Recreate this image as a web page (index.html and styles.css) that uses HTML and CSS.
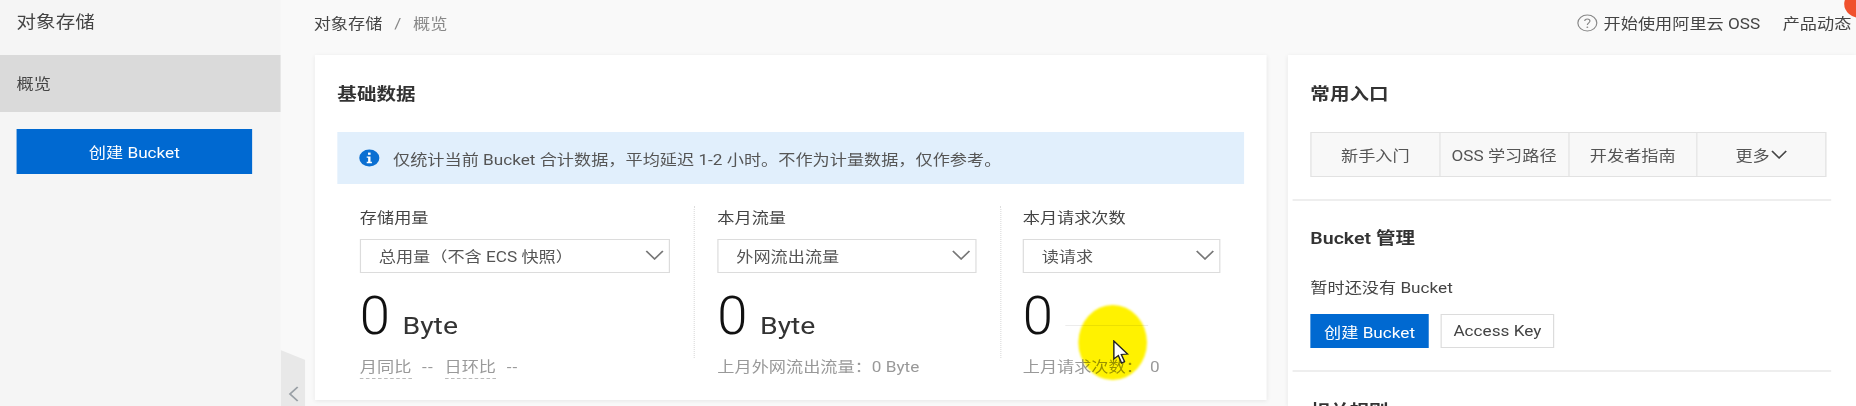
FILE: index.html
```html
<!DOCTYPE html>
<html lang="zh-CN">
<head>
  <meta charset="UTF-8" />
  <meta name="viewport" content="width=device-width, initial-scale=1.0"/>
  <title>对象存储 - 概览</title>
  <link rel="stylesheet" href="styles.css">
</head>
<body>
  <div class="page">
    <aside class="sidebar">
      <div class="sidebar-title">对象存储</div>
      <div class="nav-item">概览</div>
      <button class="btn btn-primary btn-wide">创建 Bucket</button>
    </aside>

    <div class="collapse-tab">
      <svg width="10" height="16" viewBox="0 0 10 16"><path d="M8.5 1 L2 8 L8.5 15" fill="none" stroke="#9aa0a6" stroke-width="1.6"/></svg>
    </div>

    <main class="main">
      <header class="topbar">
        <div class="breadcrumb">对象存储<span class="sep">/</span><span class="crumb-current">概览</span></div>
        <div class="toplinks">
          <span class="help">
            <svg width="18" height="18" viewBox="0 0 18 18"><circle cx="9" cy="9" r="8" fill="none" stroke="#888" stroke-width="1"/><path d="M6.8 7 C6.8 4.2 11.2 4.2 11.2 7 C11.2 8.8 9 8.8 9 11" fill="none" stroke="#888" stroke-width="1"/><circle cx="9" cy="13.2" r=".8" fill="#888"/></svg>
            开始使用阿里云 OSS
          </span>
          <span>产品动态</span>
        </div>
        <span class="red-dot"></span>
      </header>

      <div class="content">
        <section class="card card-data">
          <h2 class="card-title">基础数据</h2>
          <div class="alert">
            <svg width="18" height="18" viewBox="0 0 18 18"><circle cx="9" cy="9" r="8.5" fill="#0a6fd2"/><rect x="7.9" y="3.6" width="2.2" height="2.2" fill="#fff"/><path d="M6.8 7.4 H10 V12.8 H11.2 V14.2 H6.8 V12.8 H8 V8.8 H6.8 Z" fill="#fff"/></svg>
            仅统计当前 Bucket 合计数据，平均延迟 1-2 小时。不作为计量数据，仅作参考。
          </div>
          <div class="stats">
            <div class="stat stat-storage">
              <div class="stat-label">存储用量</div>
              <div class="select">总用量（不含 ECS 快照）
                <svg class="chevron" width="16" height="10" viewBox="0 0 16 10"><path d="M1 1 L8 9 L15 1" fill="none" stroke="#777" stroke-width="1.5"/></svg>
              </div>
              <div class="stat-value"><span class="num">0</span><span class="unit">Byte</span></div>
              <div class="stat-foot"><span class="dashed">月同比</span><span class="dash-val">--</span><span class="dashed">日环比</span><span class="dash-val">--</span></div>
            </div>
            <div class="stat stat-flow">
              <div class="stat-label">本月流量</div>
              <div class="select">外网流出流量
                <svg class="chevron" width="16" height="10" viewBox="0 0 16 10"><path d="M1 1 L8 9 L15 1" fill="none" stroke="#777" stroke-width="1.5"/></svg>
              </div>
              <div class="stat-value"><span class="num">0</span><span class="unit">Byte</span></div>
              <div class="stat-foot">上月外网流出流量：0 Byte</div>
            </div>
            <div class="stat stat-req">
              <div class="stat-label">本月请求次数</div>
              <div class="select">读请求
                <svg class="chevron" width="16" height="10" viewBox="0 0 16 10"><path d="M1 1 L8 9 L15 1" fill="none" stroke="#777" stroke-width="1.5"/></svg>
              </div>
              <div class="stat-value"><span class="num">0</span></div>
              <div class="stat-foot">上月请求次数：<span class="req-last">0</span></div>
            </div>
          </div>
        </section>

        <section class="card card-side">
          <div class="side-block side-entry">
            <h2 class="card-title">常用入口</h2>
            <div class="entry-group">
              <span>新手入门</span>
              <span>OSS 学习路径</span>
              <span>开发者指南</span>
              <span>更多<svg width="14" height="9" viewBox="0 0 14 9"><path d="M1 1 L7 8 L13 1" fill="none" stroke="#444" stroke-width="1.4"/></svg></span>
            </div>
          </div>
          <div class="side-block side-bucket">
            <h2 class="card-title">Bucket 管理</h2>
            <p class="empty-note">暂时还没有 Bucket</p>
            <div class="btn-row">
              <button class="btn btn-primary">创建 Bucket</button>
              <button class="btn btn-plain">Access Key</button>
            </div>
          </div>
          <div class="side-block side-next">
            <h2 class="card-title">相关规则</h2>
          </div>
        </section>
      </div>
    </main>

    <!-- mouse pointer highlight from the recording -->
    <div class="ghost-line"></div>
    <div class="cursor-spot"></div>
    <svg class="cursor" width="14" height="26" viewBox="0 0 14 26"><path d="M1 1 L1 19 L4.8 15.5 L7.5 23 L10 21.5 L7.3 14.5 L12.6 14 Z" fill="#fff" stroke="#222" stroke-width="1.2"/></svg>
  </div>
</body>
</html>
```

FILE: styles.css
```css
* {
  box-sizing: border-box;
}

html, body {
  margin: 0;
  height: 100%;
  overflow: hidden;
}

body {
  font-family: Roboto, "Noto Sans CJK SC", sans-serif;
  font-size: 14.5px;
  color: #444;
  background: #f9f9f9;
}

/* the recording is stretched sideways, so the page is laid out at 1568 wide */
.page {
  position: relative;
  display: flex;
  width: 1568px;
  height: 406px;
  overflow: hidden;
  background: #f9f9f9;
  transform: scaleX(1.1837);
  transform-origin: 0 0;
  filter: blur(0.4px);
}

/* sidebar */
.sidebar {
  width: 237px;
  flex: none;
  background: #f5f5f5;
}

.sidebar-title {
  height: 55px;
  padding: 8px 14px 0;
  font-size: 16.5px;
  line-height: 30px;
}

.nav-item {
  height: 57px;
  padding: 1px 0 0 14px;
  line-height: 57px;
  background: #dadada;
}

.btn {
  height: 34px;
  padding: 0;
  border: 1px solid transparent;
  font-family: inherit;
  font-size: 14.5px;
}

.btn-primary {
  width: 100px;
  background: #0069d1;
  color: #fff;
}

.btn-wide {
  display: block;
  width: 199px;
  height: 45px;
  margin: 17px 0 0 14px;
}

.btn-plain {
  width: 96px;
  background: #fff;
  border-color: #dcdcdc;
  color: #444;
}

.collapse-tab {
  flex: none;
  width: 21px;
  height: 56px;
  margin-top: 350px;
  padding: 36px 0 0 6px;
  background: #e8e8e8;
  clip-path: polygon(0 0, 100% 10px, 100% 100%, 0 100%);
}

/* main area */
.main {
  flex: 1;
  min-width: 0;
  padding-left: 7px;
}

.topbar {
  position: relative;
  display: flex;
  justify-content: space-between;
  align-items: center;
  height: 55px;
  padding-bottom: 10px;
}

.sep {
  margin: 0 10px;
  color: #888;
}

.crumb-current {
  color: #888;
}

.toplinks {
  display: flex;
  gap: 19px;
  margin-right: 4px;
}

.help {
  display: flex;
  align-items: center;
  gap: 5px;
}

.red-dot {
  position: absolute;
  top: -10px;
  right: -18px;
  width: 28px;
  height: 28px;
  border-radius: 50%;
  background: #f0512d;
}

.content {
  display: flex;
  gap: 18px;
}

.card {
  background: #fff;
  box-shadow: 0 1px 4px rgba(0, 0, 0, 0.08);
}

.card-data {
  width: 804px;
  height: 345px;
  flex: none;
  margin-left: 1px;
  padding: 0 19px;
}

.card-side {
  flex: 1;
  height: 351px;
  overflow: hidden;
}

.card-title {
  margin: 0;
  padding-top: 27px;
  font-size: 16.5px;
  font-weight: 600;
  line-height: 26px;
  color: #333;
}

.alert {
  display: flex;
  align-items: center;
  gap: 11px;
  height: 52px;
  margin-top: 24px;
  padding-left: 18px;
  background: #e1effc;
  color: #555;
}

.stats {
  display: flex;
  margin-top: 22px;
}

.stat {
  height: 152px;
}

.stat-storage {
  width: 301px;
  padding-left: 19px;
}

.stat-flow {
  width: 259px;
  padding-left: 19px;
  border-left: 1px dotted #ddd;
}

.stat-req {
  padding-left: 18px;
  border-left: 1px dotted #ddd;
}

.stat-storage .select {
  width: 262px;
}

.stat-flow .select {
  width: 219px;
}

.stat-req .select {
  width: 167px;
}

.stat-label {
  height: 33px;
  padding-top: 1px;
  line-height: 24px;
}

.select {
  display: flex;
  justify-content: space-between;
  align-items: center;
  height: 34px;
  padding: 0 4px 2px 15px;
  border: 1px solid #dcdcdc;
  color: #555;
}

.stat-value {
  display: flex;
  align-items: baseline;
  height: 80px;
  padding-top: 11px;
  font-size: 54px;
  font-weight: 300;
  line-height: 64px;
  color: #111;
}

.num {
  display: inline-block;
  width: 36px;
  transform: scaleX(0.85);
  transform-origin: left;
}

.unit {
  font-size: 24px;
  font-weight: 400;
  line-height: 1;
  color: #333;
}

.stat-foot {
  padding-top: 1px;
  line-height: 28px;
  color: #999;
  white-space: nowrap;
}

.dashed {
  padding-bottom: 2px;
  border-bottom: 1px dashed #bbb;
}

.dash-val {
  margin: 0 9px;
  letter-spacing: 1px;
}

.req-last {
  margin-left: 6px;
}

/* right column */
.side-block {
  margin-left: 4px;
  padding: 0 15px;
  border-bottom: 2px solid #eee;
  width: 455px;
}

.side-entry {
  height: 146px;
}

.side-entry .entry-group {
  margin-top: 24px;
}

.side-bucket {
  height: 171px;
}

.side-bucket .card-title {
  padding-top: 25px;
}

.side-next {
  border-bottom: 0;
}

.entry-group {
  display: flex;
  width: 436px;
  height: 45px;
  background: #f8f8f8;
  border: 1px solid #e2e2e2;
}

.entry-group span {
  display: flex;
  flex: 1;
  justify-content: center;
  align-items: center;
  gap: 1px;
  border-left: 1px solid #e2e2e2;
  color: #555;
}

.entry-group span:first-child {
  border-left: 0;
}

.empty-note {
  margin: 25px 0 0;
  line-height: 24px;
}

.btn-row {
  display: flex;
  gap: 10px;
  margin-top: 13px;
}

/* recording overlay */
.ghost-line {
  position: absolute;
  left: 900px;
  top: 325px;
  width: 70px;
  height: 1px;
  background: #ececec;
}

.cursor-spot {
  position: absolute;
  left: 911px;
  top: 305px;
  width: 58px;
  height: 75px;
  border-radius: 50%;
  background: #fff200;
  mix-blend-mode: multiply;
  filter: blur(1px);
}

.cursor {
  position: absolute;
  left: 940px;
  top: 340px;
}
```
